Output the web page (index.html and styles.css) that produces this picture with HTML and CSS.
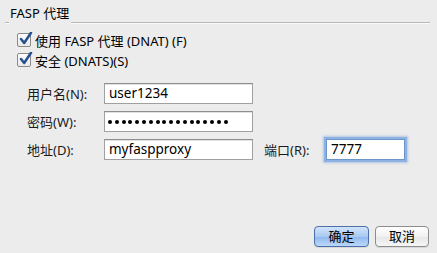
FILE: index.html
```html
<!DOCTYPE html>
<html>
<head>
<meta charset="utf-8">
<link rel="stylesheet" href="styles.css">
</head>
<body>
<div class="dialog">
  <div class="group-title">
    <span class="rule-start"></span>
    <span class="title">FASP 代理</span>
    <span class="rule"></span>
  </div>
  <div class="checks">
    <div class="check"><span class="box"><svg width="15" height="15" viewBox="0 0 15 15"><path d="M3 7 L6.2 11 L13 0.8" fill="none" stroke="#24508f" stroke-width="2.5" stroke-linecap="round" stroke-linejoin="round"/></svg></span><span>使用 FASP 代理 (DNAT) (F)</span></div>
    <div class="check"><span class="box"><svg width="15" height="15" viewBox="0 0 15 15"><path d="M3 7 L6.2 11 L13 0.8" fill="none" stroke="#24508f" stroke-width="2.5" stroke-linecap="round" stroke-linejoin="round"/></svg></span><span>安全 (DNATS)(S)</span></div>
  </div>
  <div class="form">
    <div class="row"><span class="lbl">用户名(N):</span><div class="field">user1234</div></div>
    <div class="row"><span class="lbl">密码(W):</span><div class="field dots"><span class="dot"></span><span class="dot"></span><span class="dot"></span><span class="dot"></span><span class="dot"></span><span class="dot"></span><span class="dot"></span><span class="dot"></span><span class="dot"></span><span class="dot"></span><span class="dot"></span><span class="dot"></span><span class="dot"></span><span class="dot"></span><span class="dot"></span><span class="dot"></span><span class="dot"></span><span class="dot"></span></div></div>
    <div class="row"><span class="lbl">地址(D):</span><div class="field">myfaspproxy</div><span class="lbl2">端口(R):</span><div class="field port">7777</div></div>
  </div>
  <div class="buttons">
    <div class="btn default">确定</div>
    <div class="btn">取消</div>
  </div>
</div>
</body>
</html>
```
FILE: styles.css
```css
html, body {
  margin: 0;
  padding: 0;
  background: #ececec;
}
body {
  width: 437px;
  height: 253px;
  overflow: hidden;
  font-family: "Noto Sans", "Noto Sans CJK SC", sans-serif;
  font-size: 13px;
  color: #000;
}
.dialog {
  display: flex;
  flex-direction: column;
  height: 253px;
  box-sizing: border-box;
  padding: 9px 7px 0 5px;
}
.group-title {
  display: flex;
  align-items: flex-end;
  height: 15px;
}
.rule-start {
  width: 4px;
  height: 0;
  border-top: 1px solid #b8b8b8;
  border-bottom: 1px solid #fafafa;
}
.title {
  padding: 0 2px 0 1px;
  line-height: 17px;
  position: relative;
  top: -2px;
}
.rule {
  flex: 1;
  height: 0;
  border-top: 1px solid #b8b8b8;
  border-bottom: 1px solid #fafafa;
}
.checks {
  display: flex;
  flex-direction: column;
  gap: 4px;
  margin-top: 8px;
  padding-left: 12px;
}
.check {
  display: flex;
  align-items: center;
  height: 16px;
  gap: 4px;
}
.box {
  width: 12px;
  height: 12px;
  border: 1px solid #8a8a8a;
  border-radius: 2px;
  background: linear-gradient(#ffffff, #e9e9e9);
  position: relative;
  flex: none;
}
.box svg {
  position: absolute;
  left: 0;
  top: -2px;
}
.form {
  display: flex;
  flex-direction: column;
  gap: 7px;
  margin-top: 15px;
  padding-left: 22px;
}
.row {
  display: flex;
  align-items: center;
  height: 21px;
}
.lbl {
  width: 77px;
  color: #1a1a1a;
}
.field {
  box-sizing: border-box;
  width: 149px;
  height: 21px;
  background: #fff;
  border: 1px solid #a0a0a0;
  border-top-color: #8e8e8e;
  box-shadow: inset 0 1px 0 #e2e2e2;
  padding: 0 4px;
  line-height: 19px;
  font-size: 13.5px;
}
.dots {
  display: flex;
  align-items: center;
  gap: 2.8px;
  padding-left: 3px;
}
.dot {
  width: 4px;
  height: 4px;
  border-radius: 50%;
  background: #000;
  flex: none;
}
.lbl2 {
  margin-left: 11px;
  width: 62px;
  color: #1a1a1a;
}
.port {
  width: 79px;
  border: 1px solid #6e95c8;
  box-shadow: 0 0 0 2px #8cb2e4, 0 0 2px 3px rgba(120,160,220,0.5);
}
.buttons {
  margin-top: auto;
  margin-bottom: 6px;
  display: flex;
  justify-content: flex-end;
  gap: 6px;
  padding-right: 1px;
}
.btn {
  box-sizing: border-box;
  width: 54px;
  height: 21px;
  border: 1px solid #8d8d8d;
  border-radius: 4px;
  background: linear-gradient(#ffffff, #f1f1f1 50%, #e6e6e6 51%, #f6f6f6);
  text-align: center;
  line-height: 19px;
  font-size: 13px;
  box-shadow: 0 1px 0 rgba(0,0,0,0.08);
}
.btn.default {
  width: 55px;
  border-color: #4d6fa8;
  background: linear-gradient(#d2e4fb, #a8c9f1 50%, #8fb6ec 51%, #bcd8fb);
}
```
